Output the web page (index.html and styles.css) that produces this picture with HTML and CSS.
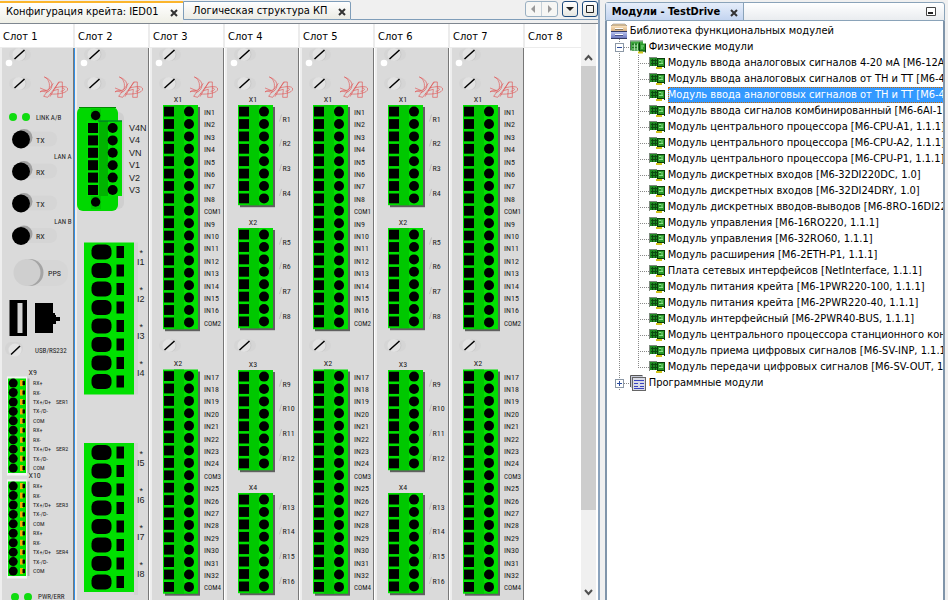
FILE: index.html
```html
<!DOCTYPE html>
<html lang="ru">
<head>
<meta charset="utf-8">
<title>TestDrive</title>
<link rel="stylesheet" href="styles.css">
</head>
<body>
<svg class="defs" aria-hidden="true">
  <defs>
    <linearGradient id="gold" x1="0" y1="0" x2="0" y2="1"><stop offset="0" stop-color="#fbe3bd"/><stop offset="1" stop-color="#d8b283"/></linearGradient>
    <linearGradient id="steel" x1="0" y1="0" x2="0" y2="1"><stop offset="0" stop-color="#b9c2ee"/><stop offset="1" stop-color="#6d79bf"/></linearGradient>
    <symbol id="i-board" viewBox="0 0 16 12">
      <rect x="0" y="1" width="8" height="8" fill="#1f8a22"/>
      <path d="M0 .5h8M.5 1v9" stroke="#7f8a7f" fill="none"/>
      <path d="M2 3.500h6M2 6.500h6M3.500 2v7M6.500 2v7" stroke="#0c4a10" fill="none"/>
      <rect x="8" y="1" width="7" height="9" fill="#2a9a2a"/>
      <path d="M8.500 1v8M15.500 1v10M8 1.500h7M8 9.500h8" stroke="#0a3d0c" fill="none"/>
      <path d="M10 3.500h2M13 3v3M10 6.500h4" stroke="#8be08b" fill="none"/>
      <rect x="7" y="10" width="6" height="2" fill="#d3c51a"/>
    </symbol>
    <symbol id="i-boards" viewBox="0 0 16 13">
      <path d="M0 .5h13M.5 1v9" stroke="#55705a" fill="none"/>
      <rect x="1" y="1" width="12" height="9" fill="#3fa83f"/>
      <rect x="2" y="3" width="7" height="7" fill="#1f7d22"/>
      <path d="M2 5.500h6M2 8.500h6M4.500 3v7M7.500 3v7" stroke="#a5e0a5" fill="none"/>
      <rect x="9" y="3" width="6" height="8" fill="#2a9a2a"/>
      <path d="M9.500 2v9M15.500 3v9M9 10.500h7" stroke="#0a3d0c" fill="none"/>
      <path d="M11 5.500h3M11 7.500h2" stroke="#8be08b" fill="none"/>
      <rect x="8" y="11" width="5" height="2" fill="#d3c51a"/>
    </symbol>
    <symbol id="i-library" viewBox="0 0 16 16">
      <path d="M2 1h12l2 2H0z" fill="#e8c99a" stroke="#777" stroke-width=".5"/><rect x="0" y="3" width="16" height="5" fill="url(#gold)"/>
      <path d="M0 8.500h16M0 15.500h16" stroke="#333a66"/>
      <rect x="0" y="9" width="16" height="6" fill="url(#steel)"/>
      <path d="M4 5.500h8" stroke="#fff"/><path d="M4 6.500h8" stroke="#8a7a60"/>
      <path d="M4 11.500h8" stroke="#fff"/><path d="M4 12.500h8" stroke="#4a5288"/>
    </symbol>
    <symbol id="i-program" viewBox="0 0 16 16">
      <path d="M.5 12V.5h12" fill="none" stroke="#555"/><rect x="1" y="1" width="12" height="12" fill="#c6c9d8"/>
      <rect x="2.500" y="2.500" width="13" height="13" fill="#d9dbe6" stroke="#666"/>
      <path d="M4 5.500h10M4 8.500h4M10 8.500h4M4 11.500h4M10 11.500h4M4 13.500h10" stroke="#3944c0"/>
    </symbol>
  </defs>
</svg>

<main class="workspace">
  <section class="editor">
    <header class="tabbar">
      <div class="tab tab-active"><button type="button" class="tab-name">Конфигурация крейта: IED01</button><button type="button" class="close" aria-label="Закрыть"><svg viewBox="0 0 6 6"><path d="M0 0l6 6M6 0l-6 6"/></svg></button></div>
      <div class="tab tab-idle"><button type="button" class="tab-name">Логическая структура КП</button><button type="button" class="close" aria-label="Закрыть"><svg viewBox="0 0 6 6"><path d="M0 0l6 6M6 0l-6 6"/></svg></button></div>
      <div class="tools">
        <div class="pager">
          <button type="button" aria-label="Назад"><svg viewBox="0 0 14 14"><path d="M9 3v8L5 7z" fill="#999"/></svg></button>
          <button type="button" aria-label="Вперёд"><svg viewBox="0 0 14 14"><path d="M6 3v8l4-4z" fill="#999"/></svg></button>
        </div>
        <button type="button" class="tool" aria-label="Список"><svg viewBox="0 0 14 14"><path d="M3 5h8L7 9z" fill="#222"/></svg></button>
        <button type="button" class="tool" aria-label="Развернуть"><svg viewBox="0 0 14 14"><path d="M3.500 3.500h7v7h-7z" fill="none" stroke="#222"/></svg></button>
      </div>
    </header>
    <div class="crate">
      <div class="slots" id="slots"></div>
      <div class="scroll" aria-hidden="true">
        <div class="scroll-head"></div>
        <svg class="arrow" viewBox="0 0 15 17"><path d="M4 11l3.500-4 3.500 4" /></svg>
        <div class="thumb"></div>
        <div class="track"></div>
        <svg class="arrow" viewBox="0 0 15 17"><path d="M4 7l3.500 4 3.500-4" /></svg>
      </div>
    </div>
  </section>

  <aside class="palette">
    <header class="palette-bar">
      <div class="palette-tab"><h1>Модули - TestDrive</h1><button type="button" class="close" aria-label="Закрыть"><svg viewBox="0 0 6 6"><path d="M0 0l6 6M6 0l-6 6"/></svg></button></div>
      <button type="button" class="minimize" aria-label="Свернуть"><svg viewBox="0 0 10 9"><path d="M.5.5h9v8h-9z" fill="#fff" stroke="#444"/><path d="M2 6h5" stroke="#222" stroke-width="2"/></svg></button>
    </header>
    <div class="tree">
      <div class="node root"><svg class="ico ico-tall"><use href="#i-library"/></svg><span class="name">Библиотека функциональных модулей</span></div>
      <div class="branch">
        <div class="node group"><button type="button" class="expander" aria-label="Свернуть ветвь"><svg viewBox="0 0 9 9"><path d="M2 4.500h5"/></svg></button><span class="lead"></span><svg class="ico ico-tall"><use href="#i-boards"/></svg><span class="name">Физические модули</span></div>
        <ul class="modules">
          <li class="node"><span class="lead"></span><svg class="ico"><use href="#i-board"/></svg><span class="name">Модуль ввода аналоговых сигналов 4-20 мА [M6-12AI</span></li>
          <li class="node"><span class="lead"></span><svg class="ico"><use href="#i-board"/></svg><span class="name">Модуль ввода аналоговых сигналов от ТН и ТТ [M6-4V</span></li>
          <li class="node selected"><span class="lead"></span><svg class="ico"><use href="#i-board"/></svg><span class="name">Модуль ввода аналоговых сигналов от ТН и ТТ [M6-4V</span></li>
          <li class="node"><span class="lead"></span><svg class="ico"><use href="#i-board"/></svg><span class="name">Модуль ввода сигналов комбинированный [M6-6AI-16</span></li>
          <li class="node"><span class="lead"></span><svg class="ico"><use href="#i-board"/></svg><span class="name">Модуль центрального процессора [M6-CPU-A1, 1.1.1]</span></li>
          <li class="node"><span class="lead"></span><svg class="ico"><use href="#i-board"/></svg><span class="name">Модуль центрального процессора [M6-CPU-A2, 1.1.1]</span></li>
          <li class="node"><span class="lead"></span><svg class="ico"><use href="#i-board"/></svg><span class="name">Модуль центрального процессора [M6-CPU-P1, 1.1.1]</span></li>
          <li class="node"><span class="lead"></span><svg class="ico"><use href="#i-board"/></svg><span class="name">Модуль дискретных входов [M6-32DI220DC, 1.0]</span></li>
          <li class="node"><span class="lead"></span><svg class="ico"><use href="#i-board"/></svg><span class="name">Модуль дискретных входов [M6-32DI24DRY, 1.0]</span></li>
          <li class="node"><span class="lead"></span><svg class="ico"><use href="#i-board"/></svg><span class="name">Модуль дискретных вводов-выводов [M6-8RO-16DI22</span></li>
          <li class="node"><span class="lead"></span><svg class="ico"><use href="#i-board"/></svg><span class="name">Модуль управления [M6-16RO220, 1.1.1]</span></li>
          <li class="node"><span class="lead"></span><svg class="ico"><use href="#i-board"/></svg><span class="name">Модуль управления [M6-32RO60, 1.1.1]</span></li>
          <li class="node"><span class="lead"></span><svg class="ico"><use href="#i-board"/></svg><span class="name">Модуль расширения [M6-2ETH-P1, 1.1.1]</span></li>
          <li class="node"><span class="lead"></span><svg class="ico"><use href="#i-board"/></svg><span class="name">Плата сетевых интерфейсов [NetInterface, 1.1.1]</span></li>
          <li class="node"><span class="lead"></span><svg class="ico"><use href="#i-board"/></svg><span class="name">Модуль питания крейта [M6-1PWR220-100, 1.1.1]</span></li>
          <li class="node"><span class="lead"></span><svg class="ico"><use href="#i-board"/></svg><span class="name">Модуль питания крейта [M6-2PWR220-40, 1.1.1]</span></li>
          <li class="node"><span class="lead"></span><svg class="ico"><use href="#i-board"/></svg><span class="name">Модуль интерфейсный [M6-2PWR40-BUS, 1.1.1]</span></li>
          <li class="node"><span class="lead"></span><svg class="ico"><use href="#i-board"/></svg><span class="name">Модуль центрального процессора станционного контр</span></li>
          <li class="node"><span class="lead"></span><svg class="ico"><use href="#i-board"/></svg><span class="name">Модуль приема цифровых сигналов [M6-SV-INP, 1.1.1]</span></li>
          <li class="node"><span class="lead"></span><svg class="ico"><use href="#i-board"/></svg><span class="name">Модуль передачи цифровых сигналов [M6-SV-OUT, 1.</span></li>
        </ul>
        <div class="node group"><button type="button" class="expander" aria-label="Развернуть ветвь"><svg viewBox="0 0 9 9"><path d="M2 4.500h5M4.500 2v5"/></svg></button><span class="lead"></span><svg class="ico ico-tall"><use href="#i-program"/></svg><span class="name">Программные модули</span></div>
      </div>
    </div>
  </aside>
</main>
<script src="script.js"></script>
</body>
</html>
```
FILE: styles.css
```css
* { box-sizing: border-box; }
body {
  margin: 0;
  background: #f0f0f0;
  color: #000;
  font: 11px/16px "DejaVu Sans Condensed", "DejaVu Sans", sans-serif;
}
button { margin: 0; padding: 0; border: 0; background: none; color: inherit; font: inherit; }
svg { display: block; }
.defs { position: absolute; width: 0; height: 0; }

.workspace { display: flex; gap: 5px; height: 100vh; padding-right: 3px; overflow: hidden; }
.editor { flex: 599 1 0; min-width: 0; display: flex; flex-direction: column; border-right: 2px solid #8ba3bd; }
.palette { flex: 341 1 0; min-width: 0; display: flex; flex-direction: column; padding-top: 2px; }

/* editor tabs */
.tabbar { display: flex; height: 24px; border-bottom: 1px solid #7f8790; }
.tab { display: flex; align-items: center; white-space: nowrap; }
.tab-active { width: 183px; padding: 0 5px 2px 6px; justify-content: space-between; border-top: 2px solid #fbb52c; background: linear-gradient(#fff, #efefe6); margin-top: 1px; }
.tab-idle { width: 168px; height: 19px; margin-top: 1px; padding: 1px 4px 0 9px; justify-content: space-between; border: 1px solid #7f9db9; border-radius: 0 2px 0 0; background: linear-gradient(#fefefe, #ebebe4); }
.close { width: 7px; height: 7px; margin-top: 2px; }
.close svg { width: 6px; height: 6px; overflow: visible; }
.close path { stroke: #333; stroke-width: 2; fill: none; }
.tools { flex: 1; display: flex; justify-content: flex-end; gap: 4px; height: 20px; padding-top: 1px; border-bottom: 1px solid #7f9db9; }
.pager { display: flex; width: 33px; height: 16px; border: 1px solid #9ab0c2; border-radius: 3px; background: #f6f6f4; }
.pager button { flex: 1; }
.pager button + button { border-left: 1px solid #c6d0d8; }
.tool { width: 16px; height: 16px; border: 1px solid #1d4a7c; border-radius: 3px; background: linear-gradient(#fff, #e6e6e0); }
.tool svg, .pager svg { width: 14px; height: 14px; }

/* crate */
.crate { flex: 1; display: flex; min-height: 0; }
.slots { flex: 1; display: flex; min-width: 0; background: #fff; overflow: hidden; }
.slot { flex: none; width: 75px; }
.slot h2 { margin: 0; height: 24px; padding-left: 3px; border-right: 2px solid #ececec; border-bottom: 1px solid #ececec; font: inherit; line-height: 26px; background: #fff; white-space: nowrap; }
.slot svg { width: 75px; height: 552px; }
.face text { font-family: "Roboto Condensed", Roboto, "Liberation Sans", sans-serif; font-size: 8px; fill: #1c1c1c; }
.face .small { font-size: 7px; }
.face .tiny { font-size: 6px; }
.face .wide { font-family: "Liberation Sans", sans-serif; font-size: 9px; }
.scroll { flex: none; width: 17px; display: flex; flex-direction: column; background: #f0f0f0; border-right: 2px solid #fff; }
.scroll-head { flex: none; height: 25px; }
.arrow { flex: none; width: 15px; height: 17px; }
.arrow path { fill: none; stroke: #505050; stroke-width: 2; }
.thumb { flex: 444; background: #cdcdcd; }
.track { flex: 73; }

/* palette */
.palette-bar { flex: none; display: flex; justify-content: space-between; align-items: center; height: 19px; padding-right: 8px; border: 1px solid #8aa3b9; border-radius: 3px 3px 0 0; background: linear-gradient(#fff, #e9ecef); }
.palette-tab { display: flex; align-items: center; justify-content: space-between; width: 138px; height: 17px; padding: 0 5px 0 6px; border-right: 1px solid #8aa3b9; background: linear-gradient(#e6eefa, #c3d4f0); white-space: nowrap; }
.palette-tab h1 { margin: 0; font-size: 11px; font-weight: bold; line-height: 16px; }
.minimize svg { width: 10px; height: 9px; }
.tree { flex: 1; padding: 2px 0 0 4px; border: solid #8095aa; border-width: 0 2px; background: #fff; overflow: hidden; }
.node { display: flex; align-items: center; height: 16px; white-space: nowrap; }
.ico { flex: none; width: 16px; height: 12px; }
.ico-tall { height: 16px; }
.name { padding-left: 3px; }
.branch { padding-left: 4px; background: repeating-linear-gradient(#888 0 1px, transparent 1px 2px) 8px 0 / 1px 352px no-repeat; }
.lead { flex: none; height: 1px; background: repeating-linear-gradient(90deg, #888 0 1px, transparent 1px 2px); }
.expander { width: 9px; height: 9px; border: 1px solid #8c98a6; background: #fff; }
.expander svg { width: 9px; height: 9px; margin: -1px; }
.expander path { stroke: #2c4c9c; fill: none; }
.group .lead { width: 6px; }
.modules { margin: 0 0 0 23px; padding: 0; list-style: none; background: repeating-linear-gradient(#888 0 1px, transparent 1px 2px) 0 0 / 1px 312px no-repeat; }
.modules .lead { width: 11px; }
.modules .name { flex: 1 0 auto; margin-left: 3px; padding: 0; }
.selected .name { height: 16px; background: #39f; color: #fff; outline: 1px dotted #c60; outline-offset: -1px; }
```
FILE: script.js
```js
// Front plates of the crate modules, drawn as SVG in a shared coordinate space.
const GREEN = '#00e000';
const DARK = '#00c800';

const rect = (x, y, w, h, fill, extra = '') => `<rect x="${x}" y="${y}" width="${w}" height="${h}" fill="${fill}" ${extra}/>`;
const dot = (x, y, r, fill) => `<circle cx="${x}" cy="${y}" r="${r}" fill="${fill}"/>`;
const text = (x, y, s, cls = '', anchor = 'start') => `<text x="${x}" y="${y}" class="${cls}" text-anchor="${anchor}">${s}</text>`;

function screw(y) {
  return rect(9, y - 6, 22, 12, '#d5d5d5', 'rx="6"') + dot(20, y, 6.5, '#c8c8c8') + dot(19, y, 6.5, '#e2e2e2') +
    `<path d="M14.500 ${y + 4.5}L24.500 ${y - 4.5}" stroke="#000" stroke-width="1.500"/>`;
}

function logo() {
  return `<g transform="scale(.3333)" fill="none" stroke="#e04848" stroke-width="1.800">
    <path d="M133 231C160 240 162 262 145 275C136 280 126 268 120 276C134 268 146 276 148 262C150 246 143 236 133 231z"/>
    <path d="M160 250L131 289L143 292L178 246"/>
    <path d="M150 290L176 246H187V292H173L175 268L160 272"/>
    <path d="M120 264L140 272M150 282C176 284 204 278 203 267C202 258 186 258 164 264M186 264C196 264 196 273 182 274"/></g>`;
}

function base(first) {
  return rect(0, 48, 2, 552, '#eee') + rect(2, 48, 71, 552, '#dadada') + rect(73, 48, 1, 552, '#777') +
    rect(74, 48, 1, 552, first ? '#2f8fe8' : '#fff') +
    screw(54.5) + dot(9, 63, 3.3, '#fff') + screw(83.5) + logo();
}

function block(y, rows, name) {
  const h = rows * 12.4 + 1;
  let s = text(28, y - 3.5, name, '', 'middle') + rect(15, y + 2, 35, h, '#606060') +
    rect(13, y, 35, h, GREEN) + rect(24, y, 10, h, DARK);
  for (let i = 0; i < rows; i++) {
    const cy = y + 6.6 + i * 12.4;
    s += rect(14, cy - 4.9, 10, 9.8, '#000') + dot(39, cy, 5, '#000');
  }
  return s;
}

function inputs() {
  let s = base() + screw(345.5);
  [[105, 'X1', 1, 1], [369.5, 'X2', 17, 3]].forEach(([y, name, first, com]) => {
    s += block(y, 18, name);
    let n = first;
    for (let i = 0; i < 18; i++) {
      const isCom = i === 8 || i === 17;
      const label = isCom ? 'COM' + (i === 8 ? com : com + 1) : 'IN' + n++;
      s += text(54, y + 10 + i * 12.4, label, isCom ? 'small' : '');
    }
  });
  return s;
}

function relays() {
  let s = base() + screw(345.5);
  [105, 228, 370, 493].forEach((y, b) => {
    s += block(y, 8, 'X' + (b + 1));
    for (let i = 0; i < 4; i++) {
      const ly = y + 16.5 + i * 24.8;
      s += `<path d="M54.500 ${ly}l2-7" stroke="#bbb"/>` + text(57.5, ly, 'R' + (b * 4 + i + 1));
    }
  });
  return s;
}

function cpu() {
  let s = base(true) + dot(13, 117, 4, '#10dc10') + dot(26, 117, 4, '#10dc10') + text(36, 120, 'LINK A/B', 'small');
  [[139.5, 'TX'], [171.5, 'RX'], [203.5, 'TX'], [236, 'RX']].forEach(([y, t]) => {
    s += rect(20, y - 8, 37, 15, '#d5d5d5', 'rx="7"') + dot(24, y - 2, 8.5, '#a0a0a0') + dot(21, y, 9, '#000') + text(36, y + 3, t);
  });
  s += text(71.5, 159, 'LAN A', 'small', 'end') + text(71.5, 223.5, 'LAN B', 'small', 'end');
  s += rect(20, 260, 48, 26, '#d6d6d6', 'rx="12"') + dot(30, 272.5, 13.5, '#a4a4a4') + dot(27, 272.5, 13.5, '#cfcfcf') + text(48, 276, 'PPS');
  s += rect(9.5, 300, 17.5, 36, '#000') + rect(17.5, 303, 5, 30, '#d4d4d4');
  s += '<path d="M35 303h18v10h2v2h1v2h4v4h-4v3h-3v9H35z"/>' + rect(5, 342, 18, 13, '#d4d4d4', 'rx="6"') + dot(15, 350, 6.5, '#e4e4e4') +
    '<path d="M11 354.500l9-8.500" stroke="#000" stroke-width="1.500"/>' + text(35, 352.5, 'USB/RS232', 'small');
  const pins = ['RX+', 'RX-', 'TX+/D+', 'TX-/D-', 'COM'];
  [[378.5, 'X9', 1], [481.5, 'X10', 3]].forEach(([y, name, ser]) => {
    s += rect(7, y - 2, 20, 99, '#f4f4f4') + rect(8, y, 18, 94.5, GREEN) + rect(27.500, y, 2, 94.5, '#a8a8a8') + text(28.5, y - 4, name);
    for (let i = 0; i < 10; i++) {
      const cy = y + 4.6 + i * 9.44;
      s += dot(13.2, cy, 4.5, '#000') + rect(20, cy - 3, 3, 6, '#f0b400') + rect(22.5, cy - 2, 2.5, 4, '#000') + text(33, cy + 2, pins[i % 5], 'tiny');
      if (i % 5 === 2) s += text(56, cy + 2, 'SER' + (ser + (i > 5 ? 1 : 0)), 'tiny');
    }
  });
  return s + dot(15, 597, 4, '#10dc10') + dot(28, 597, 4, '#10dc10') + text(38, 599, 'PWR/ERR', 'small');
}

function analog() {
  let s = base() + rect(8, 112, 41, 97, '#cfcfcf', 'rx="6"') + rect(2, 107, 41, 104, '#00d800', 'rx="6"') +
    rect(4, 107, 37, 1, '#008a00') + rect(16, 109, 10, 12, '#00c400') + rect(16, 195, 10, 14, '#00c400') +
    rect(12, 120.5, 35, 75.5, GREEN) + rect(24, 121, 9, 75, '#00b400') + rect(23, 120.5, 24, 1, '#063') +
    dot(20.6, 115.5, 4.7, '#000') + dot(20.6, 202, 4.7, '#000');
  ['V4N', 'V4', 'VN', 'V1', 'V2', 'V3'].forEach((t, i) => {
    const cy = 128 + i * 12.4;
    s += rect(13, cy - 5, 10, 10, '#000') + dot(37.7, cy, 5, '#000') + text(54, cy + 3, t, 'wide');
  });
  [[242.5, 1], [443, 5]].forEach(([y, n]) => {
    s += rect(59, y, 4, 152, '#d2d2d2') + rect(9, y, 50, n === 1 ? 152 : 149, GREEN);
    for (let i = 0; i < 8; i++) {
      const cy = y + 9.5 + i * 18.5;
      s += rect(16.500, cy - 7.5, 20, 15, '#000', 'rx="6"') + rect(41.500, cy - 6, 7.500, 12, '#000');
      if (i % 2 === 0) s += text(64.5, cy + 4, '*', 'wide') + text(62, cy + 13, 'I' + (n + i / 2), 'wide');
    }
  });
  return s;
}

const faces = [cpu, analog, inputs, relays, inputs, relays, inputs, null];
document.getElementById('slots').innerHTML = faces.map((draw, i) =>
  `<section class="slot"><h2>Слот ${i + 1}</h2>${draw ? `<svg class="face" viewBox="0 48 75 552">${draw()}</svg>` : ''}</section>`).join('');
```
